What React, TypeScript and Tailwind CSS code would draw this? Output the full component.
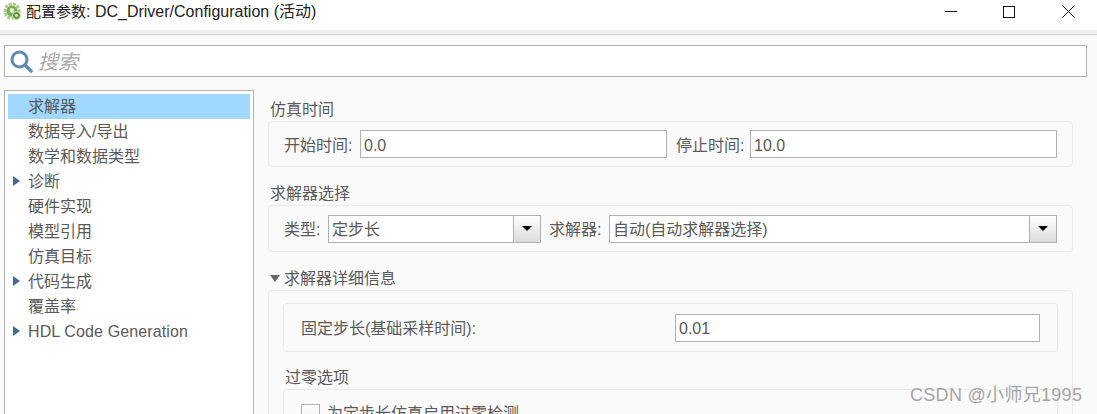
const cjk = "font-['Liberation_Sans','Noto_Sans_CJK_SC',sans-serif]";

const treeItems: { label: string; arrow?: boolean; selected?: boolean }[] = [
  { label: "求解器", selected: true },
  { label: "数据导入/导出" },
  { label: "数学和数据类型" },
  { label: "诊断", arrow: true },
  { label: "硬件实现" },
  { label: "模型引用" },
  { label: "仿真目标" },
  { label: "代码生成", arrow: true },
  { label: "覆盖率" },
  { label: "HDL Code Generation", arrow: true },
];

function Logo() {
  return (
    <svg width="20" height="20" viewBox="0 0 20 20" className="shrink-0">
      <circle cx="9" cy="9" r="7" fill="none" stroke="#a9c78c" strokeWidth="3" strokeDasharray="3 1.2" />
      <circle cx="9" cy="9" r="5.5" fill="#7cab52" />
      <circle cx="9" cy="8.5" r="2.4" fill="#e4edd6" />
      <circle cx="13.5" cy="13.5" r="4" fill="#5f9a35" stroke="#d3e3c0" strokeWidth="1" />
      <circle cx="13.5" cy="13.5" r="1.4" fill="#e4edd6" />
    </svg>
  );
}

function SearchGlass() {
  return (
    <svg width="23" height="23" viewBox="0 0 23 23" className="shrink-0">
      <circle cx="9.5" cy="9.5" r="7.5" fill="#fff" stroke="#5f8bb3" strokeWidth="3" />
      <path d="M15 15 L21 21" stroke="#5f8bb3" strokeWidth="3.6" strokeLinecap="round" />
    </svg>
  );
}

function CloseGlyph() {
  return (
    <svg width="13" height="13" viewBox="0 0 13 13">
      <path d="M0.5 0.5 L12.5 12.5 M12.5 0.5 L0.5 12.5" stroke="#111" strokeWidth="1" fill="none" />
    </svg>
  );
}

function TextBox({ value, className }: { value: string; className: string }) {
  return (
    <div className={`flex h-[28px] items-center border border-[#b0b0b0] bg-white pl-[3px] pt-[3px] text-[16px] text-[#5a5a5a] ${className}`}>
      {value}
    </div>
  );
}

function Dropdown({ value, className }: { value: string; className: string }) {
  return (
    <div className={`flex h-[28px] items-center border border-[#b0b0b0] bg-white pl-[3px] text-[16px] text-[#5a5a5a] ${className}`}>
      <span className="flex-1 pt-[3px]">{value}</span>
      <div className="flex h-full w-[27px] items-center justify-center border-l border-[#b0b0b0] bg-gradient-to-b from-white to-[#dcdcdc]">
        <div className="h-0 w-0 border-x-[5px] border-t-[5px] border-x-transparent border-t-black" />
      </div>
    </div>
  );
}

export default function App() {
  return (
    <div className={`relative flex h-[414px] w-[1097px] flex-col overflow-hidden bg-[#fafafa] text-[#5a5a5a] ${cjk}`}>
      {/* title bar */}
      <div className="flex h-[30px] shrink-0 items-center bg-white pb-[7px] pl-[3px]">
        <Logo />
        <span className="ml-[3px] whitespace-nowrap text-[16px] text-[#222]">
          <span className="text-[15px]">配置参数</span>: DC_Driver/Configuration (活动)
        </span>
        <div className="ml-auto flex items-center pr-[22px]">
          <div className="mr-[46px] h-px w-[12px] bg-[#111]" />
          <div className="mr-[47px] h-[12px] w-[12px] border border-[#111]" />
          <CloseGlyph />
        </div>
      </div>
      <div className="h-[5px] shrink-0 border-b border-[#d0d0d0] bg-[#f0f0f0]" />

      {/* search */}
      <div className="mx-[4px] mt-[10px] flex h-[32px] w-[1083px] shrink-0 items-center border border-[#b0b0b0] bg-white pl-[5px]">
        <SearchGlass />
        <span className="ml-[5px] pt-[2px] text-[20px] italic text-[#aaa]">搜索</span>
      </div>

      <div className="mt-[13px] flex min-h-0 flex-1">
        {/* tree */}
        <div className="ml-[4px] w-[250px] shrink-0 border border-b-0 border-[#b0b0b0] bg-white p-[3px]">
          {treeItems.map((item) => (
            <div
              key={item.label}
              className={`relative flex h-[25px] items-center pl-[20px] text-[16px] leading-none ${item.selected ? "bg-[#a0d8ff]" : ""} ${item.label.startsWith("HDL") ? "tracking-[0.12px]" : ""}`}
            >
              {item.arrow && (
                <div className="absolute left-[5px] top-[7px] h-0 w-0 border-y-[5px] border-l-[7px] border-y-transparent border-l-[#3f6a94]" />
              )}
              {item.label}
            </div>
          ))}
        </div>

        {/* settings */}
        <div className="ml-[14px] w-[805px] shrink-0 pt-[10px]">
          <div className="ml-[2px] h-[21px] text-[16px] leading-[20px]">仿真时间</div>
          <div className="flex h-[46px] items-center rounded-[4px] border border-[#ebebeb] pl-[15px]">
            <span className="w-[76px] whitespace-nowrap pt-[3px] text-[16px]">开始时间:</span>
            <TextBox value="0.0" className="w-[307px]" />
            <span className="ml-[9px] w-[74px] whitespace-nowrap pt-[3px] text-[16px]">停止时间:</span>
            <TextBox value="10.0" className="w-[307px]" />
          </div>

          <div className="ml-[2px] mt-[17px] h-[21px] text-[16px] leading-[20px]">求解器选择</div>
          <div className="flex h-[47px] items-center rounded-[4px] border border-[#ebebeb] pl-[15px]">
            <span className="w-[44px] whitespace-nowrap pt-[3px] text-[16px]">类型:</span>
            <Dropdown value="定步长" className="w-[213px]" />
            <span className="ml-[8px] w-[60px] whitespace-nowrap pt-[3px] text-[16px]">求解器:</span>
            <Dropdown value="自动(自动求解器选择)" className="w-[448px]" />
          </div>

          <div className="ml-[2px] mt-[15px] flex h-[23px] items-center text-[16px]">
            <div className="mr-[4px] h-0 w-0 border-x-[5px] border-t-[7px] border-x-transparent border-t-[#666]" />
            求解器详细信息
          </div>
          <div className="h-[200px] rounded-[4px] border border-[#ebebeb] px-[14px] pt-[12px]">
            <div className="flex h-[49px] items-center rounded-[4px] border border-[#ebebeb] pl-[17px]">
              <span className="w-[374px] whitespace-nowrap pt-[3px] text-[16px]">固定步长(基础采样时间):</span>
              <TextBox value="0.01" className="w-[365px]" />
            </div>
            <div className="ml-[2px] mt-[16px] h-[21px] text-[16px] leading-[20px]">过零选项</div>
            <div className="flex h-[60px] items-start rounded-[4px] border border-[#ebebeb] pl-[17px] pt-[14px]">
              <div className="h-[19px] w-[19px] border border-[#b0b0b0] bg-gradient-to-b from-white to-[#eee]" />
              <span className="ml-[7px] text-[16px] leading-[20px]">为定步长仿真启用过零检测</span>
            </div>
          </div>
        </div>
      </div>

      {/* watermark */}
      <div className="absolute left-[910px] top-[383px] whitespace-nowrap text-[18px] leading-[24px] tracking-[0.3px] text-[#a5a5a5]">CSDN @小师兄1995</div>
    </div>
  );
}
